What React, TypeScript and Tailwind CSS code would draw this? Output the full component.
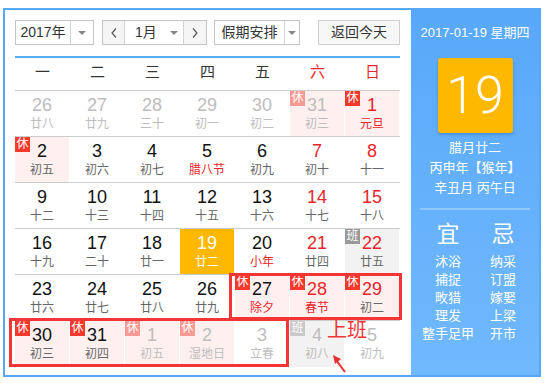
import React from 'react';

type Day = {
  d: number;
  l: string;
  other?: boolean;
  rest?: boolean;
  work?: boolean;
  wk?: boolean;
  fest?: boolean;
  today?: boolean;
};

const rows: Day[][] = [
  [
    { d: 26, l: '廿八', other: true },
    { d: 27, l: '廿九', other: true },
    { d: 28, l: '三十', other: true },
    { d: 29, l: '初一', other: true },
    { d: 30, l: '初二', other: true },
    { d: 31, l: '初三', other: true, rest: true, wk: true },
    { d: 1, l: '元旦', rest: true, wk: true, fest: true },
  ],
  [
    { d: 2, l: '初五', rest: true },
    { d: 3, l: '初六' },
    { d: 4, l: '初七' },
    { d: 5, l: '腊八节', fest: true },
    { d: 6, l: '初九' },
    { d: 7, l: '初十', wk: true },
    { d: 8, l: '十一', wk: true },
  ],
  [
    { d: 9, l: '十二' },
    { d: 10, l: '十三' },
    { d: 11, l: '十四' },
    { d: 12, l: '十五' },
    { d: 13, l: '十六' },
    { d: 14, l: '十七', wk: true },
    { d: 15, l: '十八', wk: true },
  ],
  [
    { d: 16, l: '十九' },
    { d: 17, l: '二十' },
    { d: 18, l: '廿一' },
    { d: 19, l: '廿二', today: true },
    { d: 20, l: '小年', fest: true },
    { d: 21, l: '廿四', wk: true },
    { d: 22, l: '廿五', wk: true, work: true },
  ],
  [
    { d: 23, l: '廿六' },
    { d: 24, l: '廿七' },
    { d: 25, l: '廿八' },
    { d: 26, l: '廿九' },
    { d: 27, l: '除夕', rest: true, fest: true },
    { d: 28, l: '春节', rest: true, wk: true, fest: true },
    { d: 29, l: '初二', rest: true, wk: true },
  ],
  [
    { d: 30, l: '初三', rest: true },
    { d: 31, l: '初四', rest: true },
    { d: 1, l: '初五', other: true, rest: true },
    { d: 2, l: '湿地日', other: true, rest: true },
    { d: 3, l: '立春', other: true },
    { d: 4, l: '初八', other: true, work: true, wk: true },
    { d: 5, l: '初九', other: true, wk: true },
  ],
];

const weekdays = ['一', '二', '三', '四', '五', '六', '日'];

const yi = ['沐浴', '捕捉', '畋猎', '理发', '整手足甲'];
const ji = ['纳采', '订盟', '嫁娶', '上梁', '开市'];

function Caret() {
  return <div className="h-0 w-0 border-x-[4px] border-t-[4px] border-x-transparent border-t-[#888]" />;
}

function DayCell({ day }: { day: Day }) {
  let bg = '';
  if (day.today) bg = 'bg-[#ffb800]';
  else if (day.rest) bg = 'bg-[#fff0f0]';
  else if (day.work) bg = 'bg-[#f2f2f2]';

  let numColor = 'text-[#111]';
  if (day.today) numColor = 'text-white';
  else if (day.other) numColor = 'text-[#bdbdbd]';
  else if (day.wk) numColor = 'text-[#e8262b]';

  let lunarColor = 'text-[#666]';
  if (day.today) lunarColor = 'text-white';
  else if (day.other) lunarColor = 'text-[#bdbdbd]';
  else if (day.fest) lunarColor = 'text-[#e8262b]';

  let badge = '';
  if (day.rest) badge = day.other ? 'bg-[#f89a93]' : 'bg-[#f5392d]';
  if (day.work) badge = day.other ? 'bg-[#c9c9c9]' : 'bg-[#999]';

  return (
    <div className="h-full w-[55px] pr-px">
      <div className={`relative flex h-full flex-col items-center ${bg}`}>
        {badge && (
          <div className={`absolute left-0 top-0 h-[15px] w-[15px] text-center text-[12px] leading-[15px] text-white ${badge}`}>
            {day.rest ? '休' : '班'}
          </div>
        )}
        <div className={`mt-[4px] text-[18px] leading-[20px] ${numColor}`}>{day.d}</div>
        <div className={`mt-[2px] text-[12px] leading-[14px] ${lunarColor}`}>{day.l}</div>
      </div>
    </div>
  );
}

export default function App() {
  return (
    <div className="relative h-[385px] w-[560px] bg-white pl-[3px] pt-[8px] font-['Liberation_Sans','Noto_Sans_CJK_SC',sans-serif]">
      <div className="flex h-[369px] w-[538px] border-2 border-[#59a8f8]">
        {/* Left: calendar */}
        <div className="w-[406px] pl-[10px] pt-[10px]">
          {/* Toolbar */}
          <div className="flex h-[25px] text-[14px] text-[#333]">
            <div className="flex w-[79px] border border-[#c4c4c4] bg-white">
              <div className="flex w-[55px] items-center justify-center border-r border-[#d4d4d4]">2017年</div>
              <div className="flex flex-1 items-center justify-center">
                <Caret />
              </div>
            </div>

            <div className="ml-[8px] flex w-[105px] border border-[#c4c4c4] bg-white">
              <div className="flex w-[22px] items-center justify-center border-r border-[#d4d4d4] bg-[#f5f5f5]">
                <svg width="6" height="10" viewBox="0 0 6 10">
                  <polyline points="5,0.5 1,5 5,9.5" fill="none" stroke="#555" strokeWidth="1.2" />
                </svg>
              </div>
              <div className="flex flex-1 items-center border-r border-[#d4d4d4] pl-[10px]">
                <span className="w-[35px]">1月</span>
                <Caret />
              </div>
              <div className="flex w-[22px] items-center justify-center bg-[#f5f5f5]">
                <svg width="6" height="10" viewBox="0 0 6 10">
                  <polyline points="1,0.5 5,5 1,9.5" fill="none" stroke="#555" strokeWidth="1.2" />
                </svg>
              </div>
            </div>

            <div className="ml-[7px] flex w-[86px] border border-[#c4c4c4] bg-white">
              <div className="flex w-[70px] items-center justify-center border-r border-[#d4d4d4]">假期安排</div>
              <div className="flex flex-1 items-center justify-center">
                <Caret />
              </div>
            </div>

            <button className="ml-[18px] flex w-[82px] items-center justify-center border border-[#cfcfcf] bg-[#f7f7f7] text-[14px] text-[#333]">
              返回今天
            </button>
          </div>

          <div className="mt-[11px] h-[2px] w-[385px] bg-[#5aaaf6]" />

          {/* Weekday header */}
          <div className="flex h-[33px] w-[385px] border-b border-[#cccccc]">
            {weekdays.map((w, i) => (
              <div
                key={w}
                className={`w-[55px] text-center text-[15px] leading-[28px] ${i >= 5 ? 'text-[#e8262b]' : 'text-[#333]'}`}
              >
                {w}
              </div>
            ))}
          </div>

          {/* Days */}
          {rows.map((row, ri) => (
            <div
              key={ri}
              className={`flex h-[46px] w-[385px] ${ri < rows.length - 1 ? 'border-b border-[#cccccc]' : ''}`}
            >
              {row.map((day, di) => (
                <DayCell key={di} day={day} />
              ))}
            </div>
          ))}
        </div>

        {/* Right: day detail */}
        <div className="flex flex-1 flex-col items-center bg-linear-to-b from-[#58a8fa] to-[#71b9fd] pt-[15px] text-white">
          <div className="text-[13px] leading-[16px]">2017-01-19 星期四</div>
          <div className="mt-[17px] flex h-[75px] w-[75px] items-center justify-center rounded-[3px] bg-[#ffb800] shadow-[0_2px_3px_rgba(0,60,140,0.25)]">
            <span className="font-['Roboto','Liberation_Sans',sans-serif] text-[52px] font-light leading-none">19</span>
          </div>
          <div className="mt-[5px] text-center text-[13px] leading-[20px]">
            <div>腊月廿二</div>
            <div>丙申年【猴年】</div>
            <div>辛丑月 丙午日</div>
          </div>
          <div className="mt-[10px] h-[2px] w-[110px] bg-[#8fc7fb]" />
          <div className="mt-[11px] flex w-[110px] text-[23px] leading-[26px]">
            <div className="w-[56px] text-center">宜</div>
            <div className="flex-1 text-center">忌</div>
          </div>
          <div className="mt-[6px] flex w-[110px] text-[13px] leading-[18px]">
            <div className="w-[56px] text-center">
              {yi.map(t => (
                <div key={t}>{t}</div>
              ))}
            </div>
            <div className="flex-1 text-center">
              {ji.map(t => (
                <div key={t}>{t}</div>
              ))}
            </div>
          </div>
        </div>
      </div>

      {/* Annotations */}
      <div className="absolute left-[229px] top-[273px] h-[47px] w-[173px] border-[3px] border-[#f33535]" />
      <div className="absolute left-[9px] top-[318px] h-[49px] w-[280px] border-[3px] border-[#f33535]" />
      <div className="absolute left-[327px] top-[319px] text-[20px] leading-[22px] text-[#f33535]">上班</div>
      <svg className="absolute left-[328px] top-[350px]" width="22" height="26" viewBox="0 0 22 26">
        <line x1="17" y1="22" x2="8" y2="10" stroke="#e83030" strokeWidth="2" />
        <polygon points="5,5 13,9 7,14" fill="#e83030" />
      </svg>
    </div>
  );
}
